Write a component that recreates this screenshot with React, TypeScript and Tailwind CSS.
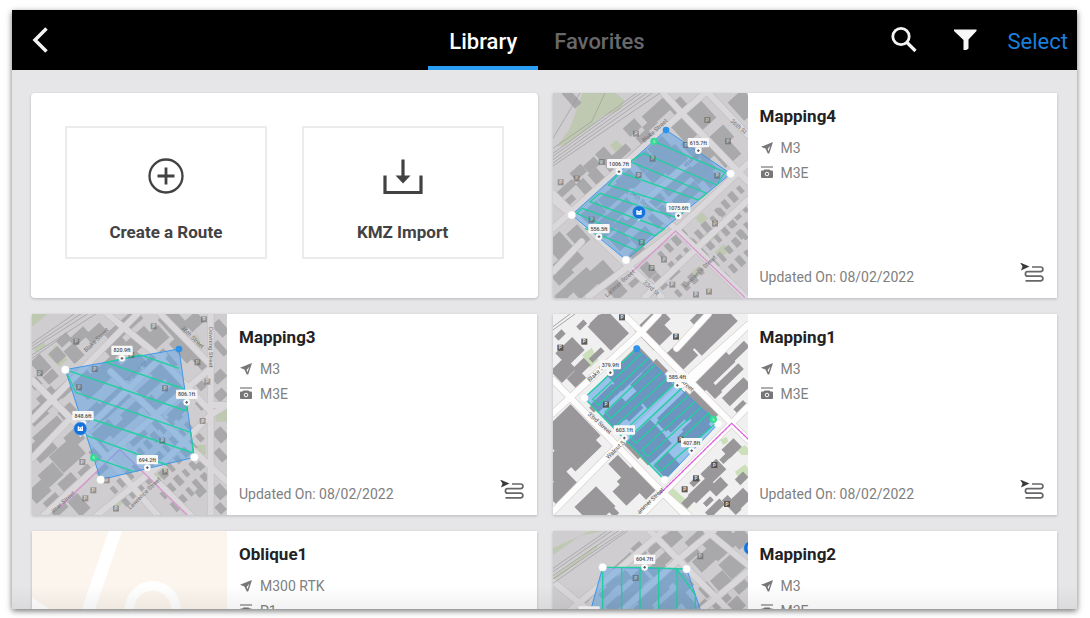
import { ReactNode, useState } from "react"

type Box = [number, number, number, number]
type Point = [number, number]
type Label = { x: number, y: number, text: string }

type MapData = {
    viewBox: string
    bright?: boolean
    angle: number
    roads: string[]
    rails?: string[]
    greens?: string[]
    // centre x, centre y, length along the street, depth
    buildings: Box[]
    boundary?: string
    parking: Point[]
    streets: (Label & { turn: number })[]
    area: string
    sweep: string
    corners: Point[]
    labels: Label[]
    start?: Point
    end?: Point
    drone?: Point
}

type Route = { name: string, aircraft: string, camera: string, updated: string, map?: MapData }

// small houses laid out in rows along a street
const houses = (x: number, y: number, cols: number, rows: number, dx = 22, dy = 34): Box[] => {
    const list: Box[] = []
    for (let r = 0; r < rows; r++) {
        for (let c = 0; c < cols; c++) {
            list.push([x + c * dx + r * dy, y - c * dx + r * dy, 14 + ((r + c) % 3) * 3, 24 + ((r * 2 + c) % 3) * 4])
        }
    }
    return list
}

const mapping4: MapData = {
    viewBox: "24 24 585 615",
    angle: -42,
    roads: [
        "M24 430L330 155L480 24", "M24 325L150 450L350 636", "M355 24L420 95L609 290",
        "M130 636L400 430L609 235", "M24 345L80 390", "M390 430L600 636", "M300 636L609 345",
        "M245 395L440 225", "M260 320L390 430", "M490 24L609 150", "M24 560L110 470",
    ],
    rails: ["M24 205L275 24", "M24 214L288 24", "M24 224L305 24", "M24 234L322 24", "M24 243L345 24", "M24 190L140 110L180 24", "M24 160L105 24"],
    greens: ["M112 24H210L238 45L225 75L170 95L130 130L60 180L35 185L75 130L100 60Z", "M195 180L215 165L240 190L220 212Z", "M450 400l22 -18l18 18l-22 18z", "M475 450l28 -22l22 20l-30 24z", "M510 500l26 -22l18 18l-28 24z", "M440 560l24 -18l12 16l-24 20z"],
    buildings: [
        [80, 40, 26, 60], [440, 105, 120, 88], [400, 65, 50, 40], [338, 80, 90, 42], [315, 120, 44, 22], [595, 60, 60, 74],
        [520, 165, 84, 50], [545, 205, 64, 60], [490, 200, 60, 40], [262, 128, 46, 34], [300, 158, 44, 34],
        [228, 205, 60, 26], [180, 215, 36, 50], [140, 240, 44, 30], [155, 275, 34, 44], [100, 262, 44, 30],
        [65, 310, 60, 22], [118, 305, 30, 44], [70, 350, 46, 20], [35, 345, 30, 30], [200, 245, 30, 20],
        [345, 190, 60, 50], [292, 222, 52, 72], [380, 225, 80, 60], [440, 195, 26, 70], [330, 265, 50, 40],
        [400, 285, 110, 36], [470, 255, 74, 50], [425, 330, 90, 34], [500, 285, 40, 34], [250, 290, 56, 54],
        [205, 330, 90, 40], [145, 385, 66, 46], [225, 375, 80, 30], [180, 425, 60, 50], [240, 415, 60, 40],
        [225, 465, 46, 50], [290, 455, 60, 34], [345, 395, 60, 46], [330, 340, 44, 46], [275, 500, 50, 20],
        [58, 500, 60, 110], [100, 455, 44, 60], [45, 560, 60, 60], [115, 595, 80, 60], [175, 570, 60, 70],
        [215, 615, 44, 50], [60, 625, 60, 30], [310, 555, 30, 46], [345, 590, 24, 50], [385, 565, 40, 22], [270, 590, 40, 18],
        ...houses(350, 510, 4, 2), ...houses(440, 470, 5, 4), ...houses(400, 625, 4, 1), ...houses(520, 380, 4, 4),
    ],
    boundary: "M262 560L392 438L598 636",
    parking: [[487, 105], [273, 146], [170, 231], [95, 281], [47, 292], [549, 169], [423, 180], [323, 221], [281, 270], [517, 272], [140, 404], [290, 472], [510, 416], [357, 524], [320, 549], [382, 599], [453, 629], [492, 620]],
    streets: [{ x: 330, y: 138, text: "Blake Street", turn: -42 }, { x: 225, y: 596, text: "Larimer Street", turn: -42 }, { x: 465, y: 560, text: "Lawrence Street", turn: -44 }, { x: 580, y: 125, text: "36th St", turn: 42 }, { x: 318, y: 610, text: "33rd St", turn: 42 }, { x: 440, y: 225, text: "Walnut", turn: -44 }, { x: 290, y: 350, text: "34th Street", turn: 40 }],
    area: "363,135 557,266 243,525 80,390",
    sweep: "M327 169L540 262L515 300L295 205L255 230L485 325L460 345L225 262L190 300L425 372L395 398L165 325L135 350L358 432L330 452L112 370L95 385L300 475L275 497L120 430",
    corners: [[557, 266], [243, 525], [80, 390]],
    labels: [{ x: 222, y: 236, text: "1006.7ft" }, { x: 460, y: 173, text: "615.7ft" }, { x: 400, y: 368, text: "1075.6ft" }, { x: 162, y: 431, text: "556.5ft" }],
    start: [327, 169],
    end: [363, 135],
    drone: [282, 382],
}

const mapping3: MapData = {
    viewBox: "24 27 585 603",
    angle: -42,
    roads: [
        "M24 345L340 27", "M24 225L190 390L400 630", "M250 27L400 150L560 320", "M60 630L290 420L560 190",
        "M560 27V630", "M260 200L490 420L609 530", "M220 630L420 470L560 330L609 300", "M410 27L560 180",
        "M190 370L420 150", "M24 460L130 350", "M560 300H609", "M290 420L500 630",
    ],
    rails: ["M24 115L150 27", "M24 124L170 27", "M24 133L190 27", "M24 150L215 27", "M24 160L110 100"],
    greens: ["M24 27H70L24 65Z", "M70 150L95 120L130 165L105 185Z", "M30 130L60 112L66 122L34 142Z", "M575 310H609V350H575Z", "M515 80L530 110L520 125Z", "M260 590l22 -18l18 20l-22 18z", "M380 520l22 -18l14 16l-22 18z", "M520 420H545V450H520Z"],
    buildings: [
        [300, 65, 120, 40], [345, 105, 80, 44], [215, 85, 60, 34], [275, 125, 66, 48], [450, 55, 60, 80], [395, 100, 66, 50],
        [510, 50, 50, 40], [480, 130, 50, 80], [525, 165, 30, 60], [165, 95, 60, 30], [120, 105, 40, 26], [150, 145, 40, 50],
        [100, 150, 36, 40], [50, 180, 40, 54], [80, 215, 40, 30], [35, 235, 30, 30], [120, 255, 44, 34], [75, 280, 60, 50],
        [40, 330, 60, 40], [130, 320, 50, 34], [75, 380, 100, 40], [55, 430, 70, 60], [130, 450, 90, 66], [155, 395, 60, 44],
        [80, 510, 60, 50], [130, 530, 54, 30], [45, 560, 60, 46], [95, 600, 50, 60], [185, 500, 40, 30], [165, 600, 40, 60],
        [240, 205, 110, 50], [190, 240, 60, 70], [320, 185, 90, 44], [410, 180, 80, 66], [450, 220, 44, 66], [380, 240, 90, 30],
        [270, 290, 110, 46], [215, 330, 60, 54], [330, 310, 90, 26], [240, 380, 70, 40], [300, 355, 110, 24], [380, 300, 46, 44],
        [430, 270, 80, 24], [225, 440, 50, 40], [340, 395, 60, 30], [400, 345, 40, 50], [460, 320, 60, 30], [230, 490, 40, 30],
        ...houses(350, 440, 6, 3), ...houses(270, 555, 4, 2), ...houses(420, 570, 5, 2),
        [590, 70, 30, 50], [590, 130, 20, 50], [585, 215, 40, 30], [590, 270, 34, 30], [590, 390, 34, 40], [590, 450, 24, 40], [588, 560, 34, 40], [590, 610, 24, 30], [530, 240, 24, 30], [530, 300, 20, 30], [532, 480, 30, 24], [530, 560, 30, 24],
    ],
    boundary: "M110 605L287 433L488 628",
    parking: [[389, 64], [157, 110], [540, 43], [47, 205], [212, 192], [165, 247], [423, 250], [536, 348], [415, 407], [550, 230], [175, 471], [248, 526], [208, 556], [184, 580], [276, 611], [424, 500], [322, 150], [520, 172]],
    streets: [{ x: 218, y: 106, text: "Blake Street", turn: -44 }, { x: 505, y: 98, text: "36th Street", turn: 44 }, { x: 560, y: 127, text: "Downing Street", turn: 90 }, { x: 350, y: 190, text: "Walnut Street", turn: -46 }, { x: 362, y: 566, text: "Lawrence Street", turn: -44 }, { x: 118, y: 592, text: "imer Street", turn: -42 }],
    area: "465,132 511,457 230,524 124,194",
    sweep: "M465 190L350 150M245 172L480 252M124 194L488 318M155 262L500 382M175 333L508 444M188 392L430 480M209 458L330 500M124 194L155 262M480 252L488 318M500 382L508 444M245 172L350 150",
    corners: [[124, 194], [511, 457], [230, 524]],
    labels: [{ x: 294, y: 136, text: "820.9ft" }, { x: 488, y: 268, text: "806.1ft" }, { x: 177, y: 332, text: "848.6ft" }, { x: 370, y: 464, text: "694.2ft" }],
    start: [209, 458],
    end: [465, 132],
    drone: [169, 371],
}

const mapping1: MapData = {
    viewBox: "24 27 585 603",
    bright: true,
    angle: -44,
    roads: [
        "M24 325L290 80L340 27", "M24 225L370 580L420 630", "M235 27L560 355L609 405", "M24 620L240 400L440 210L609 60",
        "M290 630L560 355L609 305", "M395 130L490 27", "M430 240L609 60", "M345 555L430 630",
    ],
    rails: ["M24 65L75 27", "M24 75L90 27"],
    greens: ["M112 150L140 128L160 165L135 188Z", "M570 500L600 478L609 490V515L585 530Z", "M575 435L600 420L609 430V450H590Z", "M360 565L385 550L440 600L425 615Z", "M525 405L545 395L550 410L535 420Z"],
    buildings: [
        [190, 75, 76, 100], [165, 60, 40, 50], [75, 140, 70, 54], [110, 185, 46, 30], [55, 195, 60, 50], [95, 220, 44, 40], [155, 150, 50, 16],
        [45, 90, 30, 18], [110, 60, 30, 16], [325, 80, 76, 86], [345, 45, 50, 40], [410, 150, 70, 70], [500, 75, 150, 70], [470, 40, 60, 40],
        [440, 110, 40, 40], [510, 200, 130, 42], [545, 225, 120, 24], [575, 260, 90, 34], [580, 140, 70, 24], [500, 250, 30, 60], [590, 310, 40, 30],
        [75, 390, 130, 130], [110, 440, 110, 60], [45, 470, 110, 70], [50, 550, 90, 60], [35, 400, 60, 80],
        [225, 485, 40, 60], [265, 530, 70, 70], [245, 560, 60, 60], [150, 605, 90, 84], [300, 545, 50, 60], [205, 620, 20, 30],
        [255, 190, 130, 66], [225, 240, 60, 30], [180, 280, 90, 34], [155, 300, 44, 20], [300, 220, 90, 34], [330, 200, 60, 50], [280, 280, 150, 40],
        [220, 325, 80, 54], [310, 270, 60, 60], [350, 245, 60, 44], [265, 320, 60, 26], [400, 320, 120, 60], [440, 300, 90, 54], [370, 345, 60, 40],
        [480, 330, 80, 54], [455, 370, 70, 56], [300, 400, 100, 70], [280, 420, 60, 60], [340, 430, 80, 34], [365, 480, 60, 54], [320, 450, 60, 30], [430, 395, 40, 44],
        [560, 430, 50, 36], [505, 500, 66, 44], [470, 555, 80, 36], [520, 545, 50, 34], [430, 590, 36, 24], [590, 580, 50, 40], [560, 600, 24, 60], [510, 610, 60, 24], [590, 520, 34, 24],
        [540, 460, 30, 18], [450, 530, 30, 18], [490, 590, 30, 16],
    ],
    boundary: "M345 566L560 355L609 402",
    parking: [[231, 37], [118, 110], [46, 128], [393, 95], [183, 299], [407, 404], [508, 480], [453, 520], [419, 553], [546, 597]],
    streets: [{ x: 152, y: 208, text: "Blake S", turn: -44 }, { x: 163, y: 355, text: "33rd Street", turn: 42 }, { x: 212, y: 435, text: "Walnut S", turn: -44 }, { x: 425, y: 240, text: "Street", turn: 42 }, { x: 318, y: 588, text: "arimer Street", turn: -44 }],
    area: "275,131 520,356 359,525 118,279",
    sweep: "M505 343L490 325L330 478L348 498L518 350M470 305L308 455L290 435L450 290M430 272L272 415L255 395L410 250M390 235L235 380L215 360L372 215M350 200L198 340L180 322L330 180M310 160L160 300L143 283L290 145M275 131L118 279L359 525",
    corners: [[118, 279], [520, 356], [359, 525]],
    labels: [{ x: 196, y: 179, text: "379.9ft" }, { x: 397, y: 217, text: "585.4ft" }, { x: 238, y: 375, text: "603.1ft" }, { x: 440, y: 413, text: "407.8ft" }],
    start: [505, 343],
    end: [275, 131],
}

const mapping2: MapData = {
    viewBox: "39 48 585 603",
    angle: -42,
    roads: ["M39 330L240 160L370 48", "M330 48L609 330", "M200 330L420 130L520 48", "M500 48L624 150", "M430 330L624 170", "M39 200L200 330"],
    rails: ["M39 160L200 48", "M39 170L215 48", "M39 182L235 48", "M39 192L252 48", "M39 205L262 48"],
    greens: ["M39 120L120 62L190 48H150L39 100Z", "M39 188L170 90L174 96L39 198Z"],
    buildings: [
        [390, 75, 70, 40], [360, 65, 30, 30], [470, 70, 70, 30], [540, 80, 90, 80], [600, 70, 50, 50], [450, 115, 50, 36], [500, 130, 80, 44], [580, 150, 66, 60],
        [375, 130, 60, 30], [345, 100, 44, 20], [300, 120, 40, 20], [330, 85, 24, 24], [265, 130, 34, 20], [290, 95, 34, 16], [240, 155, 40, 24], [350, 160, 50, 34],
        [545, 200, 50, 50], [600, 210, 44, 40], [500, 225, 34, 40], [540, 255, 60, 40], [590, 270, 40, 40], [490, 275, 40, 30],
        [300, 190, 44, 44], [250, 190, 44, 30], [220, 205, 44, 26], [195, 235, 36, 20], [270, 240, 90, 40], [225, 270, 50, 30], [390, 185, 60, 40], [430, 205, 44, 50],
        [340, 240, 100, 40], [400, 260, 90, 40], [300, 290, 80, 40], [445, 265, 30, 44], [150, 240, 34, 18], [130, 260, 30, 18],
    ],
    parking: [[481, 124], [287, 189]],
    streets: [],
    area: "188,157 440,162 520,400 120,400",
    sweep: "M188 157H300L440 162M188 157V330M245 157V330M300 157V330M356 160V330M411 160V330M411 162L466 240V330",
    corners: [[188, 157], [440, 162]],
    labels: [{ x: 314, y: 133, text: "604.7ft" }, { x: 147, y: 288, text: "633.2ft" }],
    drone: [631, 99],
}

const routes: Route[] = [
    { name: "Mapping4", aircraft: "M3", camera: "M3E", updated: "08/02/2022", map: mapping4 },
    { name: "Mapping3", aircraft: "M3", camera: "M3E", updated: "08/02/2022", map: mapping3 },
    { name: "Mapping1", aircraft: "M3", camera: "M3E", updated: "08/02/2022", map: mapping1 },
    { name: "Oblique1", aircraft: "M300 RTK", camera: "P1", updated: "08/02/2022" },
    { name: "Mapping2", aircraft: "M3", camera: "M3E", updated: "08/02/2022", map: mapping2 },
]

function RouteMap({ map }: { map: MapData }) {
    const { bright } = map
    return <svg viewBox={map.viewBox} preserveAspectRatio="xMinYMin slice" className="w-[195px] shrink-0 self-stretch" aria-hidden="true">
        <rect width="700" height="700" fill={bright ? "#f1f0f1" : "#cfcdd0"} />
        {map.greens?.map(d => <path key={d} d={d} fill={bright ? "#cbdfb8" : "#bfc9b1"} />)}
        {map.buildings.map(([x, y, w, h], i) => <rect
            key={i}
            x={-w / 2}
            y={-h / 2}
            width={w}
            height={h}
            transform={`translate(${x} ${y}) rotate(${map.angle})`}
            fill={bright ? "#999799" : "#a9a8aa"}
        />)}
        <g fill="none" strokeLinecap="round">
            {map.roads.map(d => <path key={d} d={d} stroke={bright ? "#d8d3cf" : "#c3c0c1"} strokeWidth="22" />)}
            {map.roads.map(d => <path key={d} d={d} stroke={bright ? "#fdfdfd" : "#dad8db"} strokeWidth="18" />)}
            {map.rails?.map(d => <path key={d} d={d} stroke={bright ? "#7e7e7e" : "#9a999b"} strokeWidth="2" />)}
            {map.boundary && <path d={map.boundary} stroke={bright ? "#dd5add" : "#d993d0"} strokeWidth="4" strokeDasharray="9 4" />}
        </g>
        {map.streets.map(({ x, y, text, turn }) => <text
            key={text}
            x={x}
            y={y}
            textAnchor="middle"
            dominantBaseline="middle"
            transform={`rotate(${turn} ${x} ${y})`}
            fontSize="18"
            fill={bright ? "#4d4d4d" : "#747275"}
        >{text}</text>)}
        <polygon points={map.area} fill={bright ? "#3f94e6" : "#5aa2e6"} fillOpacity="0.5" stroke="#3f97ea" strokeWidth="3" />
        <path d={map.sweep} fill="none" stroke="#22cf9f" strokeWidth="4" />
        {map.parking.map(([x, y]) => <g key={`${x}-${y}`} opacity={bright ? 0.9 : 0.45}>
            <rect x={x - 9} y={y - 9} width="18" height="18" fill="#4f4c47" />
            <text x={x} y={y + 5} textAnchor="middle" fontSize="14" fontWeight="700" fill="#e5e2dd">P</text>
        </g>)}
        {map.corners.map(([x, y]) => <circle key={`${x}-${y}`} cx={x} cy={y} r="12" fill="#fff" stroke="#cfd5da" />)}
        {map.start && <g>
            <circle cx={map.start[0]} cy={map.start[1]} r="11" fill="#35dc93" />
            <text x={map.start[0]} y={map.start[1] + 4} textAnchor="middle" fontSize="11" fill="#e2fff2">S</text>
        </g>}
        {map.end && <circle cx={map.end[0]} cy={map.end[1]} r="10" fill="#2d92ea" />}
        {map.labels.map(({ x, y, text }) => <g key={text}>
            <rect x={x - 4 - text.length * 4} y={y - 14} width={8 + text.length * 8} height="28" rx="3" fill="#f7f7f7" />
            <text x={x} y={y + 6} textAnchor="middle" fontSize="16" fontWeight="500" fill="#4c4c4c">{text}</text>
            <circle cx={x} cy={y + 24} r="10" fill="#fafafa" />
            <path d={`M${x - 4} ${y + 24}h8M${x} ${y + 20}v8`} stroke="#555" strokeWidth="3" />
        </g>)}
        {map.drone && <g transform={`translate(${map.drone[0]} ${map.drone[1]})`}>
            <path d="M-6 18L0 26L6 18Z" fill="#eef4fb" />
            <circle r="20" fill="#1672db" stroke="#8dbbef" strokeWidth="2" />
            <path d="M-8 -7h4v3h8v-3h4v14h-16z" fill="#fff" />
            <path d="M-4 0h2M2 0h2" stroke="#1672db" strokeWidth="3" />
        </g>}
    </svg>
}

function EmptyMap() {
    return <svg viewBox="99 48 585 603" preserveAspectRatio="xMinYMin slice" className="w-[195px] shrink-0 self-stretch" aria-hidden="true">
        <rect width="700" height="700" fill="#fcf5ee" />
        <g fill="none" stroke="#fff">
            <path d="M352 40L262 300L200 470" strokeWidth="38" />
            <path d="M60 240L260 370" strokeWidth="30" />
            <circle cx="461" cy="283" r="70" strokeWidth="28" />
        </g>
    </svg>
}

function AircraftIcon() {
    return <svg viewBox="0 0 14 14" className="size-3.5" aria-hidden="true">
        <path fillRule="evenodd" d="M1 5.8L13 1L9.2 12.5H7.8L5.4 7.6ZM7.6 8L8.5 10.2L10.3 4.8Z" fill="#777" />
    </svg>
}

function CameraIcon() {
    return <svg viewBox="0 0 14 14" className="size-3.5" aria-hidden="true">
        <path d="M1 1h12" stroke="#777" strokeWidth="1.2" />
        <path d="M4.5 3.5h5l1 1H12q1 0 1 1V11q0 1-1 1H2q-1 0-1-1V5.5q0-1 1-1h1.500z" fill="#777" />
        <circle cx="7" cy="8" r="1.8" fill="none" stroke="#fff" />
    </svg>
}

function WaypointsIcon() {
    return <svg viewBox="0 0 24 24" className="size-6" aria-hidden="true">
        <path d="M12 4H20.6a2.3 2.3 0 0 1 0 4.6H7.7a2.3 2.3 0 0 0 0 4.6H20.6a2.3 2.3 0 0 1 0 4.6H5.5" fill="none" stroke="#69666a" strokeWidth="1.7" />
        <path d="M0 -.5L9.5 3.500L1 7.5L2.500 3.500Z" fill="#3c393c" />
    </svg>
}

function ActionButton({ label, children }: { label: string, children: ReactNode }) {
    return <button type="button" className="flex flex-1 h-[133px] flex-col items-center border-2 border-[#ebebed] pt-7">
        {children}
        <span className="mt-6 text-[17px] leading-6 font-bold text-[#424244]">{label}</span>
    </button>
}

function RouteCard({ route }: { route: Route }) {
    return <article className="flex min-h-[201px] bg-white shadow-[0_1px_3px_rgba(0,0,0,0.2)]">
        {route.map ? <RouteMap map={route.map} /> : <EmptyMap />}
        <div className="flex flex-1 flex-col py-[11px] pr-[13px] pl-3 text-sm text-[#808080]">
            <h2 className="mb-[7px] text-[17px] leading-6 font-bold text-[#222224]">{route.name}</h2>
            <p className="flex h-[25px] items-center gap-[7px]"><AircraftIcon />{route.aircraft}</p>
            <p className="flex h-[25px] items-center gap-[7px]"><CameraIcon />{route.camera}</p>
            <div className="mt-auto flex items-end justify-between">
                <p className="leading-5">Updated On: {route.updated}</p>
                <WaypointsIcon />
            </div>
        </div>
    </article>
}

function App() {
    const [tab, setTab] = useState("Library")

    return <div className="flex h-screen flex-col bg-white pt-[10px] pr-[13px] pb-[9px] pl-3 font-['Roboto',sans-serif]">
        <div className="relative flex min-h-0 flex-1 flex-col bg-[#e6e6e9] shadow-[0_2px_6px_rgba(0,0,0,0.55)]">
            <header className="grid h-[60px] shrink-0 grid-cols-[1fr_auto_1fr] bg-black text-[22px]">
                <button type="button" aria-label="Back" className="w-14 pl-4">
                    <svg viewBox="0 0 24 28" className="h-7 w-6" fill="none" stroke="#f2f2f2" strokeWidth="3.500">
                        <path d="M18.500 2.500L7 14L18.500 25.500" />
                    </svg>
                </button>
                <nav className="flex">
                    {["Library", "Favorites"].map(name => <button
                        key={name}
                        type="button"
                        onClick={() => setTab(name)}
                        className={tab === name
                            ? "border-b-4 border-[#2a9df4] px-[21px] pt-1.5 font-medium text-white"
                            : "border-b-4 border-transparent px-4 pt-1.5 font-medium text-[#68686a]"}
                    >{name}</button>)}
                </nav>
                <div className="flex items-center justify-end pr-[9px]">
                    <button type="button" aria-label="Search" className="mr-9">
                        <svg viewBox="0 0 28 28" className="size-7" fill="none" stroke="#f4f4f4" strokeWidth="2.800">
                            <circle cx="11" cy="10.500" r="8.200" />
                            <path d="M17 16.500L25.500 25" strokeWidth="3.200" />
                        </svg>
                    </button>
                    <button type="button" aria-label="Filter" className="mr-[30px]">
                        <svg viewBox="0 0 24 24" className="size-6" fill="#f7f7f7">
                            <path d="M0 1.500H22.500V3L14.500 11.500V20.500L12.500 22H9.500V12L0 3Z" />
                        </svg>
                    </button>
                    <button type="button" className="pt-0.5 text-[#1b7fdc]">Select</button>
                </div>
            </header>
            <main className="grid min-h-0 flex-1 auto-rows-max grid-cols-2 gap-4 overflow-y-auto px-5 py-[23px] [scrollbar-width:none]">
                <section className="-mx-px flex gap-[35px] rounded-sm bg-white px-[34px] pt-[33px] pb-[39px] shadow-[0_1px_3px_rgba(0,0,0,0.2)]">
                    <ActionButton label="Create a Route">
                        <svg viewBox="0 0 40 40" className="size-10" fill="none" stroke="#424244">
                            <circle cx="20" cy="20" r="16.500" strokeWidth="2.300" />
                            <path d="M11.500 20h17M20 11.500v17" strokeWidth="2.800" />
                        </svg>
                    </ActionButton>
                    <ActionButton label="KMZ Import">
                        <svg viewBox="0 0 40 40" className="size-10" fill="none" stroke="#424244" strokeWidth="3.200">
                            <path d="M2 19.500V36.500H38V19.500M20 3.500V22" />
                            <path d="M12.500 19.500H27.500L20 27.500Z" fill="#424244" stroke="none" />
                        </svg>
                    </ActionButton>
                </section>
                {routes.map(route => <RouteCard key={route.name} route={route} />)}
            </main>
            <div className="pointer-events-none absolute inset-x-0 bottom-0 h-6 bg-linear-to-t from-black/5 to-transparent" />
        </div>
    </div>
}; export default App
